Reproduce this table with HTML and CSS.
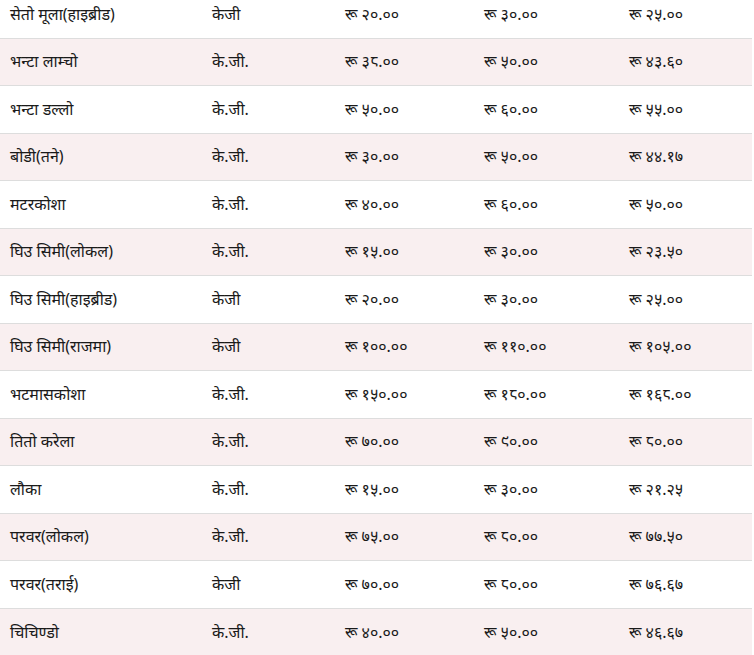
FILE: index.html
```html
<!DOCTYPE html>
<html lang="ne">
<head>
<meta charset="utf-8">
<link rel="stylesheet" href="styles.css">
</head>
<body>
<div class="wrap">
<table class="prices">
<colgroup>
<col class="c-name"><col class="c-unit"><col class="c-min"><col class="c-max"><col class="c-avg">
</colgroup>
<tbody>
<tr><td>सेतो मूला(हाइब्रीड)</td><td>केजी</td><td class="num">रू २०.००</td><td class="num">रू ३०.००</td><td class="num">रू २५.००</td></tr>
<tr><td>भन्टा लाम्चो</td><td>के.जी.</td><td class="num">रू ३८.००</td><td class="num">रू ५०.००</td><td class="num">रू ४३.६०</td></tr>
<tr><td>भन्टा डल्लो</td><td>के.जी.</td><td class="num">रू ५०.००</td><td class="num">रू ६०.००</td><td class="num">रू ५५.००</td></tr>
<tr><td>बोडी(तने)</td><td>के.जी.</td><td class="num">रू ३०.००</td><td class="num">रू ५०.००</td><td class="num">रू ४४.१७</td></tr>
<tr><td>मटरकोशा</td><td>के.जी.</td><td class="num">रू ४०.००</td><td class="num">रू ६०.००</td><td class="num">रू ५०.००</td></tr>
<tr><td>घिउ सिमी(लोकल)</td><td>के.जी.</td><td class="num">रू १५.००</td><td class="num">रू ३०.००</td><td class="num">रू २३.५०</td></tr>
<tr><td>घिउ सिमी(हाइब्रीड)</td><td>केजी</td><td class="num">रू २०.००</td><td class="num">रू ३०.००</td><td class="num">रू २५.००</td></tr>
<tr><td>घिउ सिमी(राजमा)</td><td>केजी</td><td class="num">रू १००.००</td><td class="num">रू ११०.००</td><td class="num">रू १०५.००</td></tr>
<tr><td>भटमासकोशा</td><td>के.जी.</td><td class="num">रू १५०.००</td><td class="num">रू १८०.००</td><td class="num">रू १६८.००</td></tr>
<tr><td>तितो करेला</td><td>के.जी.</td><td class="num">रू ७०.००</td><td class="num">रू ९०.००</td><td class="num">रू ८०.००</td></tr>
<tr><td>लौका</td><td>के.जी.</td><td class="num">रू १५.००</td><td class="num">रू ३०.००</td><td class="num">रू २१.२५</td></tr>
<tr><td>परवर(लोकल)</td><td>के.जी.</td><td class="num">रू ७५.००</td><td class="num">रू ८०.००</td><td class="num">रू ७७.५०</td></tr>
<tr><td>परवर(तराई)</td><td>केजी</td><td class="num">रू ७०.००</td><td class="num">रू ८०.००</td><td class="num">रू ७६.६७</td></tr>
<tr><td>चिचिण्डो</td><td>के.जी.</td><td class="num">रू ४०.००</td><td class="num">रू ५०.००</td><td class="num">रू ४६.६७</td></tr>
</tbody>
</table>
</div>
</body>
</html>
```
FILE: styles.css
```css
html, body {
  margin: 0;
  padding: 0;
  background: #fff;
}
.wrap {
  width: 752px;
  margin-top: -9.5px;
}
.prices {
  width: 752px;
  border-collapse: collapse;
  table-layout: fixed;
  font-family: "Noto Sans", "Noto Sans Devanagari", "Lohit Devanagari", sans-serif;
  font-size: 16px;
  color: #1a1a1a;
}
.c-name { width: 202px; }
.c-unit { width: 133px; }
.c-min { width: 139px; }
.c-max { width: 145px; }
.c-avg { width: 133px; }
.prices td {
  height: 47.5px;
  padding: 0 10px 1px;
  border-top: 1px solid #dddddd;
  vertical-align: middle;
  white-space: nowrap;
  box-sizing: border-box;
}
.prices tr:first-child td { border-top: none; }
.prices tr:nth-child(even) td { background: #f9eff0; }
```
